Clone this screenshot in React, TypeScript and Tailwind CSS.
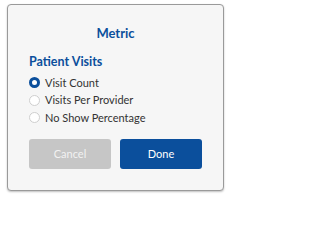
import { useState } from "react";

const options = ["Visit Count", "Visits Per Provider", "No Show Percentage"];

export default function App() {
  const [selected, setSelected] = useState(0);

  return (
    <div className="h-[201px] w-[231px] bg-white pl-[7px] pt-[4px]" style={{ fontFamily: "Lato, 'Open Sans', sans-serif" }}>
      <div className="flex h-[187px] w-[217px] flex-col rounded-[4px] border border-[#9a9a9a] bg-[#f6f6f6] px-[20px] pt-[20px] shadow-[0_1px_2px_rgba(0,0,0,0.25)]">
        <h2 className="text-center text-[13px] font-bold leading-[16px] text-[#0b4f9c]">Metric</h2>
        <h3 className="mt-[13px] pl-[1px] text-[12.5px] font-bold leading-[16px] text-[#0b4f9c]">Patient Visits</h3>
        <div className="mt-[4px] flex flex-col">
          {options.map((label, i) => (
            <label key={label} className="flex h-[17.5px] cursor-pointer items-center gap-[5px] pl-[1px] text-[11px] text-[#333]">
              <input type="radio" name="metric" className="sr-only" checked={selected === i} onChange={() => setSelected(i)} />
              <span
                className={
                  selected === i
                    ? "box-border h-[11px] w-[11px] rounded-full border-[3px] border-[#0b4f9c] bg-white"
                    : "box-border h-[11px] w-[11px] rounded-full border border-[#cfcfcf] bg-white"
                }
              />
              {label}
            </label>
          ))}
        </div>
        <div className="mt-[12.5px] flex gap-[9px] pl-[1px]">
          <button className="h-[30px] w-[82px] rounded-[3px] bg-[#c6c6c6] text-[11px] text-[#f2f2f2]">Cancel</button>
          <button className="h-[30px] w-[82px] rounded-[3px] bg-[#0b4f9c] text-[11px] text-white">Done</button>
        </div>
      </div>
    </div>
  );
}
